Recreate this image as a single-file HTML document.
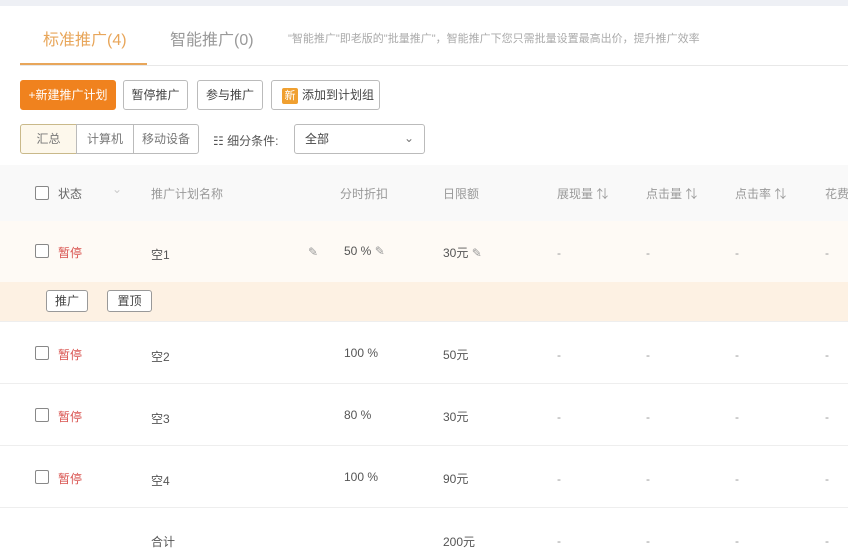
<!DOCTYPE html>
<html><head><meta charset="utf-8"><style>
*{margin:0;padding:0;box-sizing:border-box}
body{width:848px;height:556px;overflow:hidden;background:#fff;font-family:"Liberation Sans","Noto Sans CJK SC",sans-serif;font-size:12px;color:#555;position:relative}
.a{position:absolute;white-space:nowrap}
.btn{position:absolute;height:30px;border:1px solid #bbb;border-radius:3px;background:#fff;line-height:28px;text-align:center;color:#444;font-size:12px}
.cb{position:absolute;width:14px;height:14px;border:1px solid #888;border-radius:2px;background:#fff}
.row{position:absolute;left:0;width:848px;border-bottom:1px solid #eee}
.red{color:#d9534f}
.g{color:#999}
</style></head><body>
<div class="a" style="left:0;top:0;width:848px;height:6px;background:#eef0f5"></div>
<div class="a" style="left:43px;top:26px;font-size:16px;color:#e8a65a">标准推广(4)</div>
<div class="a" style="left:170px;top:26px;font-size:16px;color:#999">智能推广(0)</div>
<div class="a" style="left:288px;top:30px;font-size:11px;color:#aaa">"智能推广"即老版的"批量推广"，智能推广下您只需批量设置最高出价，提升推广效率</div>
<div class="a" style="left:20px;top:65px;width:828px;height:1px;background:#e8e8e8"></div>
<div class="a" style="left:20px;top:63px;width:127px;height:2px;background:#e8a65a"></div>
<div class="btn" style="left:20px;top:80px;width:96px;background:#f0821e;border-color:#f0821e;color:#fff">+新建推广计划</div>
<div class="btn" style="left:123px;top:80px;width:65px">暂停推广</div>
<div class="btn" style="left:197px;top:80px;width:66px">参与推广</div>
<div class="btn" style="left:271px;top:80px;width:109px;text-align:left;padding-left:10px"><span style="display:inline-block;width:16px;height:16px;line-height:16px;background:#f0a030;color:#fff;text-align:center;border-radius:2px;font-size:11px;margin-right:4px">新</span>添加到计划组</div>
<div class="btn" style="left:20px;top:124px;width:57px;background:#fdf8ec;border-color:#c9b98a;border-radius:3px 0 0 3px;color:#777">汇总</div>
<div class="btn" style="left:76px;top:124px;width:58px;border-radius:0;color:#777">计算机</div>
<div class="btn" style="left:133px;top:124px;width:66px;border-radius:0 3px 3px 0;color:#777">移动设备</div>
<div class="a" style="left:213px;top:132px;color:#555">☷ 细分条件:</div>
<div class="btn" style="left:294px;top:124px;width:131px;text-align:left;padding-left:10px">全部<span style="position:absolute;right:10px;top:-1px;color:#777">⌄</span></div>
<div class="row" style="top:165px;height:56px;background:#f9f9f9;border:none"></div>
<div class="cb" style="left:35px;top:186px"></div>
<div class="a" style="left:58px;top:185px;color:#666">状态</div>
<div class="a" style="left:112px;top:182px;color:#ccc">⌄</div>
<div class="a g" style="left:151px;top:185px">推广计划名称</div>
<div class="a g" style="left:340px;top:185px">分时折扣</div>
<div class="a g" style="left:443px;top:185px">日限额</div>
<div class="a g" style="left:557px;top:185px">展现量 ⇅</div>
<div class="a g" style="left:646px;top:185px">点击量 ⇅</div>
<div class="a g" style="left:735px;top:185px">点击率 ⇅</div>
<div class="a g" style="left:825px;top:185px">花费</div>
<div class="row" style="top:221px;height:61px;background:#fefaf5;border:none"></div>
<div class="row" style="top:282px;height:40px;background:#fdf1e3"></div>
<div class="btn" style="left:46px;top:290px;width:42px;height:22px;line-height:20px;border-color:#999">推广</div>
<div class="btn" style="left:107px;top:290px;width:45px;height:22px;line-height:20px;border-color:#999">置顶</div>
<div class="row" style="top:322px;height:62px"></div>
<div class="row" style="top:384px;height:62px"></div>
<div class="row" style="top:446px;height:62px"></div>
<div class="cb" style="left:35px;top:244px"></div><div class="a red" style="left:58px;top:244px">暂停</div><div class="a" style="left:151px;top:246px">空1</div><div class="a g" style="left:308px;top:245px">✎</div><div class="a" style="left:344px;top:244px">50 % <span class="g">✎</span></div><div class="a" style="left:443px;top:244px">30元 <span class="g">✎</span></div>
<div class="cb" style="left:35px;top:346px"></div><div class="a red" style="left:58px;top:346px">暂停</div><div class="a" style="left:151px;top:348px">空2</div><div class="a" style="left:344px;top:346px">100 %</div><div class="a" style="left:443px;top:346px">50元</div>
<div class="cb" style="left:35px;top:408px"></div><div class="a red" style="left:58px;top:408px">暂停</div><div class="a" style="left:151px;top:410px">空3</div><div class="a" style="left:344px;top:408px">80 %</div><div class="a" style="left:443px;top:408px">30元</div>
<div class="cb" style="left:35px;top:470px"></div><div class="a red" style="left:58px;top:470px">暂停</div><div class="a" style="left:151px;top:472px">空4</div><div class="a" style="left:344px;top:470px">100 %</div><div class="a" style="left:443px;top:470px">90元</div>
<div class="a" style="left:151px;top:533px">合计</div><div class="a" style="left:443px;top:533px">200元</div>
<div class="a g" style="left:557px;top:246px">-</div><div class="a g" style="left:646px;top:246px">-</div><div class="a g" style="left:735px;top:246px">-</div><div class="a g" style="left:825px;top:246px">-</div>
<div class="a g" style="left:557px;top:348px">-</div><div class="a g" style="left:646px;top:348px">-</div><div class="a g" style="left:735px;top:348px">-</div><div class="a g" style="left:825px;top:348px">-</div>
<div class="a g" style="left:557px;top:410px">-</div><div class="a g" style="left:646px;top:410px">-</div><div class="a g" style="left:735px;top:410px">-</div><div class="a g" style="left:825px;top:410px">-</div>
<div class="a g" style="left:557px;top:472px">-</div><div class="a g" style="left:646px;top:472px">-</div><div class="a g" style="left:735px;top:472px">-</div><div class="a g" style="left:825px;top:472px">-</div>
<div class="a g" style="left:557px;top:534px">-</div><div class="a g" style="left:646px;top:534px">-</div><div class="a g" style="left:735px;top:534px">-</div><div class="a g" style="left:825px;top:534px">-</div>
</body></html>
